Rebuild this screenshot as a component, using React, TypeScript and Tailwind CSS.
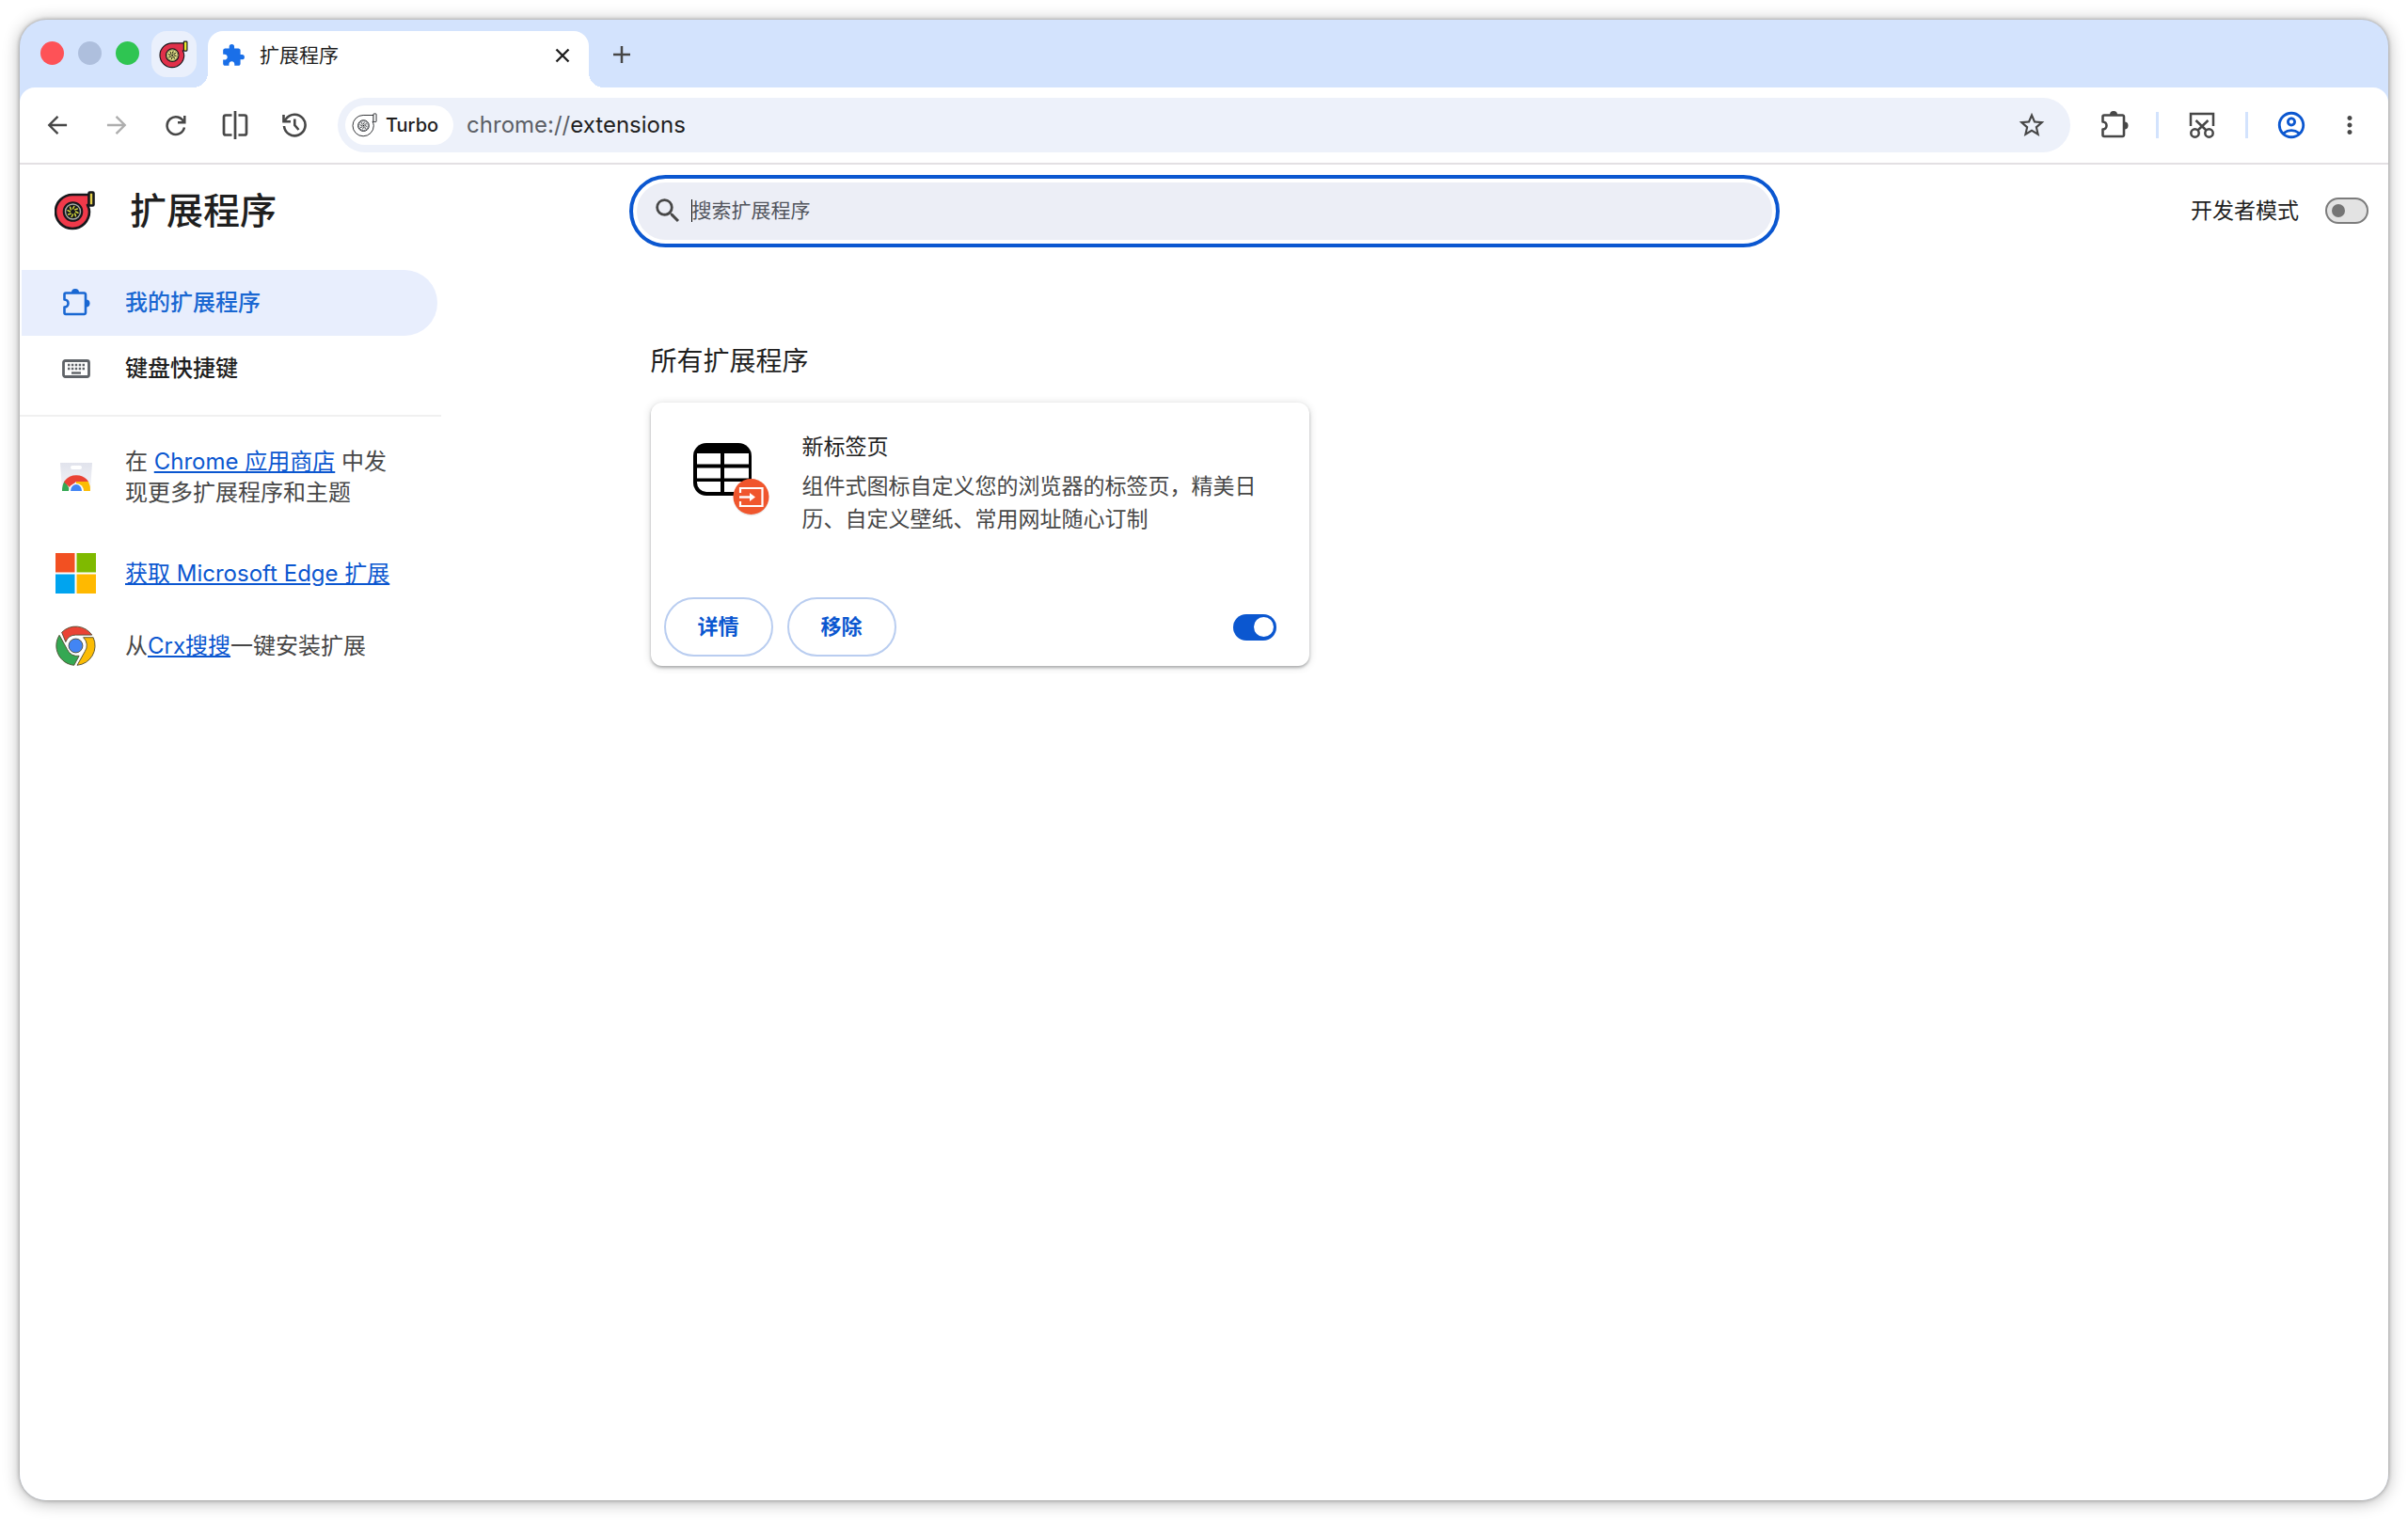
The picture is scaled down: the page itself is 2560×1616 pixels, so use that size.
import React from 'react';
import { MdExtension, MdMoreVert, MdOutlineAccountCircle, MdSearch, MdStarOutline } from 'react-icons/md';

type TurboProps = {
  className?: string;
  body: string;
  flange: string;
  fan: string;
  hub: string;
  ring: string;
  line?: number;
};

const TurboIcon: React.FC<TurboProps> = ({ className, body, flange, fan, hub, ring, line = 2 }) => (
  <svg viewBox="0 0 44 42" fill="none" className={className} aria-hidden="true">
    <g stroke="#16181c" strokeWidth={line} strokeLinejoin="round">
      <path d="M37 4H19A18 18 0 1 0 37 22C37 19 36 17 35 15H37Z" fill={body} />
      <rect x="36.5" y="1.5" width="5" height="14" rx="1" fill={flange} />
      <circle cx="19.5" cy="22" r="9.5" fill={hub} />
    </g>
    <circle cx="19.5" cy="22" r="8" fill="none" stroke={ring} strokeWidth={1.4} />
    {[0, 45, 90, 135, 180, 225, 270, 315].map((deg) => (
      <path key={deg} d="M19.5 19L20.8 16.5" stroke={fan} strokeWidth={1.5} strokeLinecap="round" transform={`rotate(${deg} 19.5 22)`} />
    ))}
    <circle cx="19.5" cy="22" r="1.5" fill="#16181c" />
  </svg>
);

const PuzzleOutline: React.FC<{ className?: string }> = ({ className }) => (
  <svg viewBox="0 0 30 30" fill="none" className={className} aria-hidden="true">
    <path
      d="M4 4.5H23.5A1.5 1.5 0 0 1 25 6V25.5A1.5 1.5 0 0 1 23.5 27H4A1.5 1.5 0 0 1 2.5 25.5V19.5C5 19.5 6.5 17.5 6.5 15.5C6.5 13.5 5 11.5 2.5 11.5V6A1.5 1.5 0 0 1 4 4.5Z"
      stroke="currentColor"
      strokeWidth="2.6"
      strokeLinejoin="round"
    />
    <path d="M10 4A4 4 0 0 1 18 4Z" fill="currentColor" />
    <path d="M25.5 11.5A4 4 0 0 1 25.5 19.5Z" fill="currentColor" />
  </svg>
);

const ArrowIcon: React.FC<{ className?: string }> = ({ className }) => (
  <svg viewBox="0 0 24 24" fill="none" stroke="currentColor" strokeWidth="2.6" className={className} aria-hidden="true">
    <path d="M12.5 2L2.5 12L12.5 22M3 12H23" />
  </svg>
);

const ReloadIcon = () => (
  <svg viewBox="0 0 24 24" fill="none" stroke="currentColor" strokeWidth="2.5" className="size-6" aria-hidden="true">
    <path d="M20.5 9A9.3 9.3 0 1 0 21 14.5" />
    <path d="M21.3 2V9.3H14" />
  </svg>
);

const SplitIcon = () => (
  <svg viewBox="0 0 28 30" fill="none" stroke="currentColor" strokeWidth="2.7" className="h-[30px] w-7" aria-hidden="true">
    <path d="M10.5 4.5H4A2 2 0 0 0 2 6.5V23.5A2 2 0 0 0 4 25.5H10.5M14 0V30M17.5 4.5H24A2 2 0 0 1 26 6.5V23.5A2 2 0 0 1 24 25.5H17.5" />
  </svg>
);

const HistoryIcon = () => (
  <svg viewBox="0 0 28 28" fill="none" stroke="currentColor" strokeWidth="2.6" className="size-7" aria-hidden="true">
    <path d="M3 15A11.3 11.3 0 1 0 5 7.5L3.5 9.5" />
    <path d="M2.5 3V10.3H10" />
    <path d="M14.3 7.5V14L18.5 19" />
  </svg>
);

const ScissorsIcon = () => (
  <svg viewBox="0 0 28 28" fill="none" stroke="currentColor" strokeWidth="2.5" className="size-7" aria-hidden="true">
    <path d="M2 15V2H26V15" />
    <path d="M7.5 9L19 20M20.5 9L9 20" />
    <circle cx="6.5" cy="22.5" r="4.2" />
    <circle cx="21.5" cy="22.5" r="4.2" />
  </svg>
);

const KeyboardIcon = () => (
  <svg viewBox="0 0 30 20" fill="none" className="h-5 w-[30px] text-[#5f6368]" aria-hidden="true">
    <rect x="1.5" y="1.5" width="27" height="17" rx="2" stroke="currentColor" strokeWidth="2.8" />
    <path d="M6 6H24M6 10H24" stroke="currentColor" strokeWidth="2.4" strokeDasharray="2.4 1.5" />
    <path d="M10 14.5H20" stroke="currentColor" strokeWidth="2.4" />
  </svg>
);

const WebStoreIcon = () => (
  <svg viewBox="0 0 34 30" className="h-[30px] w-[34px]" aria-hidden="true">
    <defs>
      <linearGradient id="bag" x1="0" y1="0" x2="0" y2="1">
        <stop offset="0" stopColor="#e1e3ec" />
        <stop offset="1" stopColor="#f4f5f9" />
      </linearGradient>
    </defs>
    <path d="M0 0H34L32 30H2Z" fill="url(#bag)" />
    <rect x="11" y="3" width="12" height="4" rx="2" fill="#fff" />
    <path d="M2 30A15 17 0 0 1 5 19L11 30Z" fill="#34a853" />
    <path d="M4 20.5A15 14 0 0 1 30 20H17L10 26Z" fill="#ea4335" />
    <path d="M17 20H30A15 17 0 0 1 32 30H17Z" fill="#fbbc04" />
    <path d="M9 30A8 8 0 0 1 25 30Z" fill="#fff" />
    <path d="M11 30A6 7 0 0 1 23 30Z" fill="#4285f4" />
  </svg>
);

const MicrosoftIcon = () => (
  <svg viewBox="0 0 43 43" className="size-[43px]" aria-hidden="true">
    <path d="M0 0H20.5V20.5H0Z" fill="#f25022" />
    <path d="M22.5 0H43V20.5H22.5Z" fill="#7fba00" />
    <path d="M0 22.5H20.5V43H0Z" fill="#00a4ef" />
    <path d="M22.5 22.5H43V43H22.5Z" fill="#ffb900" />
  </svg>
);

const ChromeIcon = () => (
  <svg viewBox="0 0 48 48" className="size-[43px]" aria-hidden="true">
    <g stroke="#4d4a2e" strokeWidth="1">
      <path d="M7.4 8.2A23.3 23.3 0 0 1 43.3 11.3H24A12.7 12.7 0 0 0 12.1 19.5Z" fill="#ea4335" />
      <path d="M33 14.2H44.8A23.3 23.3 0 0 1 25.7 47.2L34.8 31A12.7 12.7 0 0 0 33 14.2Z" fill="#fbbc04" />
      <path d="M4.6 11.5L14 28.5A12.7 12.7 0 0 0 28 36L22 47.2A23.3 23.3 0 0 1 4.6 11.5Z" fill="#34a853" />
      <circle cx="24" cy="24" r="8.3" fill="#4285f4" />
    </g>
  </svg>
);

const NewTabIcon = () => (
  <svg viewBox="0 0 82 80" fill="none" className="h-20 w-[82px]" aria-hidden="true">
    <rect width="62" height="56" rx="14" fill="#000" />
    <path d="M4 11H29V22.5H4ZM33 11H59V22.5H33ZM4 26.5H29V37.5H4ZM33 26.5H59V37.5H33ZM33 41H59V42A10 10 0 0 1 49 52H33ZM4 41H29V52H14A10 10 0 0 1 4 42Z" fill="#fff" />
    <circle cx="61.5" cy="58.5" r="19" fill="#d9d9d9" opacity="0.6" />
    <circle cx="61.5" cy="57" r="19" fill="#f0562d" />
    <path d="M50 53V48H73.5V67H50V62" stroke="#fff" strokeWidth="2.2" />
    <path d="M49 57.5H61" stroke="#fff" strokeWidth="2.4" />
    <path d="M60 53L66 57.5L60 62Z" fill="#fff" />
  </svg>
);

const TabStrip = () => (
  <div className="flex h-[72px] items-end pl-[22px]">
    <div className="mb-6 flex gap-[15px]">
      <span className="size-[25px] rounded-full bg-[#fe5257]" />
      <span className="size-[25px] rounded-full bg-[#aebfdd]" />
      <span className="size-[25px] rounded-full bg-[#2fc552]" />
    </div>
    <button aria-label="Turbo" className="mb-[11px] ml-[13px] flex h-[49px] w-12 items-center justify-center rounded-2xl bg-[#eaf0fc]">
      <TurboIcon className="h-[30px] w-8" body="#e0304a" flange="#e8ea2c" fan="#2a2c18" hub="#e6e28a" ring="#8a8b5a" line={1.6} />
    </button>
    <div className="relative ml-3 flex h-[60px] w-[405px] items-center rounded-t-2xl bg-white pr-4 pb-2 pl-3.5 before:absolute before:bottom-0 before:-left-4 before:size-4 before:bg-[radial-gradient(circle_at_0_0,transparent_16px,white_16px)] after:absolute after:-right-4 after:bottom-0 after:size-4 after:bg-[radial-gradient(circle_at_100%_0,transparent_16px,white_16px)]">
      <MdExtension className="size-[26px] text-[#1a6fe8]" />
      <span className="ml-[15px] flex-1 text-[21px] leading-7 text-[#1f1f1f]">扩展程序</span>
      <button aria-label="关闭" className="p-1 text-[#1f1f1f]">
        <svg viewBox="0 0 16 16" stroke="currentColor" strokeWidth="2.4" className="size-4">
          <path d="M1.5 1.5L14.5 14.5M14.5 1.5L1.5 14.5" />
        </svg>
      </button>
    </div>
    <button aria-label="新标签页" className="mb-[26px] ml-[26px] text-[#474747]">
      <svg viewBox="0 0 18 18" stroke="currentColor" strokeWidth="2.5" className="size-[18px]">
        <path d="M9 0V18M0 9H18" />
      </svg>
    </button>
  </div>
);

const Toolbar = () => (
  <div className="flex h-[82px] items-center rounded-t-2xl border-b-2 border-[#e3e0e3] bg-white pr-[26px] pl-[26px] text-[#474747]">
    <div className="flex items-center gap-[35px]">
      <button aria-label="后退" className="flex w-7 justify-center"><ArrowIcon className="size-[22px]" /></button>
      <button aria-label="前进" className="flex w-7 justify-center text-[#aeaeae]"><ArrowIcon className="size-[22px] rotate-180" /></button>
      <button aria-label="重新加载" className="flex w-7 justify-center"><ReloadIcon /></button>
      <button aria-label="分屏"><SplitIcon /></button>
      <button aria-label="历史记录"><HistoryIcon /></button>
    </div>
    <div className="ml-8 flex h-[58px] flex-1 items-center rounded-full bg-[#edf1fa] pr-[25px] pl-2">
      <span className="flex h-[42px] items-center gap-2 rounded-full bg-white px-[7px] pr-4 text-[20px] font-medium text-[#1f1f1f]">
        <TurboIcon className="h-[26px] w-7" body="#fff" flange="#fff" fan="#3c4043" hub="#fff" ring="#5f6368" line={1.4} />
        Turbo
      </span>
      <label className="ml-3.5 flex flex-1 items-center text-2xl text-[#5c5f66]">
        chrome://
        <input aria-label="地址" defaultValue="extensions" className="min-w-0 flex-1 bg-transparent text-[#1f1f1f] outline-none" />
      </label>
      <button aria-label="收藏"><MdStarOutline className="size-8" /></button>
    </div>
    <div className="ml-8 flex items-center">
      <button aria-label="扩展程序"><PuzzleOutline className="size-[30px]" /></button>
      <span className="ml-[29px] h-7 w-[3px] bg-[#d3e3fd]" />
      <button aria-label="截图" className="ml-8"><ScissorsIcon /></button>
      <span className="ml-8 h-7 w-[3px] bg-[#d3e3fd]" />
      <button aria-label="账号" className="ml-[29px] text-[#0b57d0]"><MdOutlineAccountCircle className="size-[34px]" /></button>
      <button aria-label="菜单" className="ml-[30px]"><MdMoreVert className="size-[30px]" /></button>
    </div>
  </div>
);

const SearchHeader = () => (
  <header className="grid h-[98px] grid-cols-[1fr_minmax(0,1223px)_1fr] items-center">
    <div className="flex items-center pl-[37px]">
      <TurboIcon className="h-[42px] w-11" body="#f0394a" flange="#e3cf4a" fan="#d8dc3c" hub="#16181c" ring="#a9aca8" line={2.6} />
      <h1 className="ml-9 text-[39px] leading-[48px] font-medium text-[#1f1f1f]">扩展程序</h1>
    </div>
    <div className="rounded-full border-4 border-[#0b57d0] p-1">
      <label className="flex h-[61px] items-center rounded-full bg-[#eceef6] pl-4 text-[#474747]">
        <MdSearch className="size-[34px]" />
        <span className="ml-2 h-6 w-px bg-black" />
        <input
          type="search"
          aria-label="搜索扩展程序"
          placeholder="搜索扩展程序"
          className="min-w-0 flex-1 bg-transparent text-[21px] outline-none placeholder:text-[#51545c]"
        />
      </label>
    </div>
    <label className="flex items-center justify-end gap-7 pr-[21px] text-[23px] text-[#1f1f1f]">
      开发者模式
      <input
        type="checkbox"
        className="flex h-7 w-[46px] appearance-none items-center rounded-full border-2 border-[#7c7c7c] bg-[#e3e3e3] px-[5px] before:size-[14px] before:rounded-full before:bg-[#757575]"
      />
    </label>
  </header>
);

const Sidebar = () => (
  <nav className="w-[448px] pt-3.5 text-2xl text-[#474747]">
    <a href="#extensions" className="mr-1 ml-0.5 flex h-[70px] items-center rounded-r-full bg-[#e8eefd] pl-[43px] font-medium text-[#1967d2]">
      <PuzzleOutline className="size-[30px]" />
      <span className="ml-[37px]">我的扩展程序</span>
    </a>
    <a href="#shortcuts" className="flex h-[70px] items-center pl-[45px] font-medium text-[#1f1f1f]">
      <KeyboardIcon />
      <span className="ml-[37px]">键盘快捷键</span>
    </a>
    <hr className="mt-[14px] border-t-2 border-[#f0f0f0]" />
    <div className="mt-[31px] flex items-center pl-[38px] leading-[33px]">
      <span className="flex w-[43px] justify-center"><WebStoreIcon /></span>
      <p className="ml-[31px]">
        在 <a href="#store" className="text-[#0b57d0] underline">Chrome 应用商店</a> 中发
        <br />
        现更多扩展程序和主题
      </p>
    </div>
    <div className="mt-12 flex items-center pl-[38px] leading-[33px]">
      <MicrosoftIcon />
      <a href="#edge" className="ml-[31px] text-[#0b57d0] underline">获取 Microsoft Edge 扩展</a>
    </div>
    <div className="mt-[34px] flex items-center pl-[38px] leading-[33px]">
      <ChromeIcon />
      <p className="ml-[31px]">
        从<a href="#crx" className="text-[#0b57d0] underline">Crx搜搜</a>一键安装扩展
      </p>
    </div>
  </nav>
);

const ExtensionCard = () => (
  <article className="flex h-[280px] w-[700px] max-w-full flex-col rounded-xl bg-white shadow-[0_2px_3px_rgba(60,64,67,0.35),0_1px_8px_rgba(60,64,67,0.2)]">
    <div className="flex flex-1 pt-[30px] pr-12 pl-[45px]">
      <div className="mt-[13px] shrink-0"><NewTabIcon /></div>
      <div className="ml-[34px] text-[23px] leading-[35px]">
        <h3 className="text-[#1f1f1f]">新标签页</h3>
        <p className="mt-[7px] text-[#474747]">
          {'组件式图标自定义您的浏览器的标签页\uff0c精美日历、自定义壁纸、常用网址随心订制'}
        </p>
      </div>
    </div>
    <div className="flex items-center gap-[15px] pr-[35px] pb-[10px] pl-[14px]">
      <button className="h-[63px] w-[116px] rounded-full border-2 border-[#b9cdf0] text-[22px] font-bold text-[#0b57d0]">详情</button>
      <button className="h-[63px] w-[116px] rounded-full border-2 border-[#b9cdf0] text-[22px] font-bold text-[#0b57d0]">移除</button>
      <input
        type="checkbox"
        defaultChecked
        aria-label="启用新标签页"
        className="ml-auto flex h-7 w-[46px] appearance-none items-center justify-end rounded-full bg-[#0b57d0] px-[3px] before:size-[21px] before:rounded-full before:bg-white"
      />
    </div>
  </article>
);

export default function App() {
  return (
    <div lang="zh-CN" className="flex min-h-screen flex-col bg-white p-[21px] font-['Inter','Noto_Sans_CJK_SC',sans-serif]">
      <div className="flex flex-1 flex-col overflow-hidden rounded-[28px] bg-[#d3e3fd] shadow-[0_0_4px_rgba(0,0,0,0.35),0_2px_18px_rgba(0,0,0,0.3)]">
        <TabStrip />
        <Toolbar />
        <div className="flex-1 bg-white">
          <SearchHeader />
          <div className="grid grid-cols-[1fr_minmax(0,1223px)_1fr]">
            <Sidebar />
            <main className="pt-[91px] pl-[23px]">
              <h2 className="mb-6 text-[28px] leading-10 text-[#1f1f1f]">所有扩展程序</h2>
              <ExtensionCard />
            </main>
          </div>
        </div>
      </div>
    </div>
  );
}
